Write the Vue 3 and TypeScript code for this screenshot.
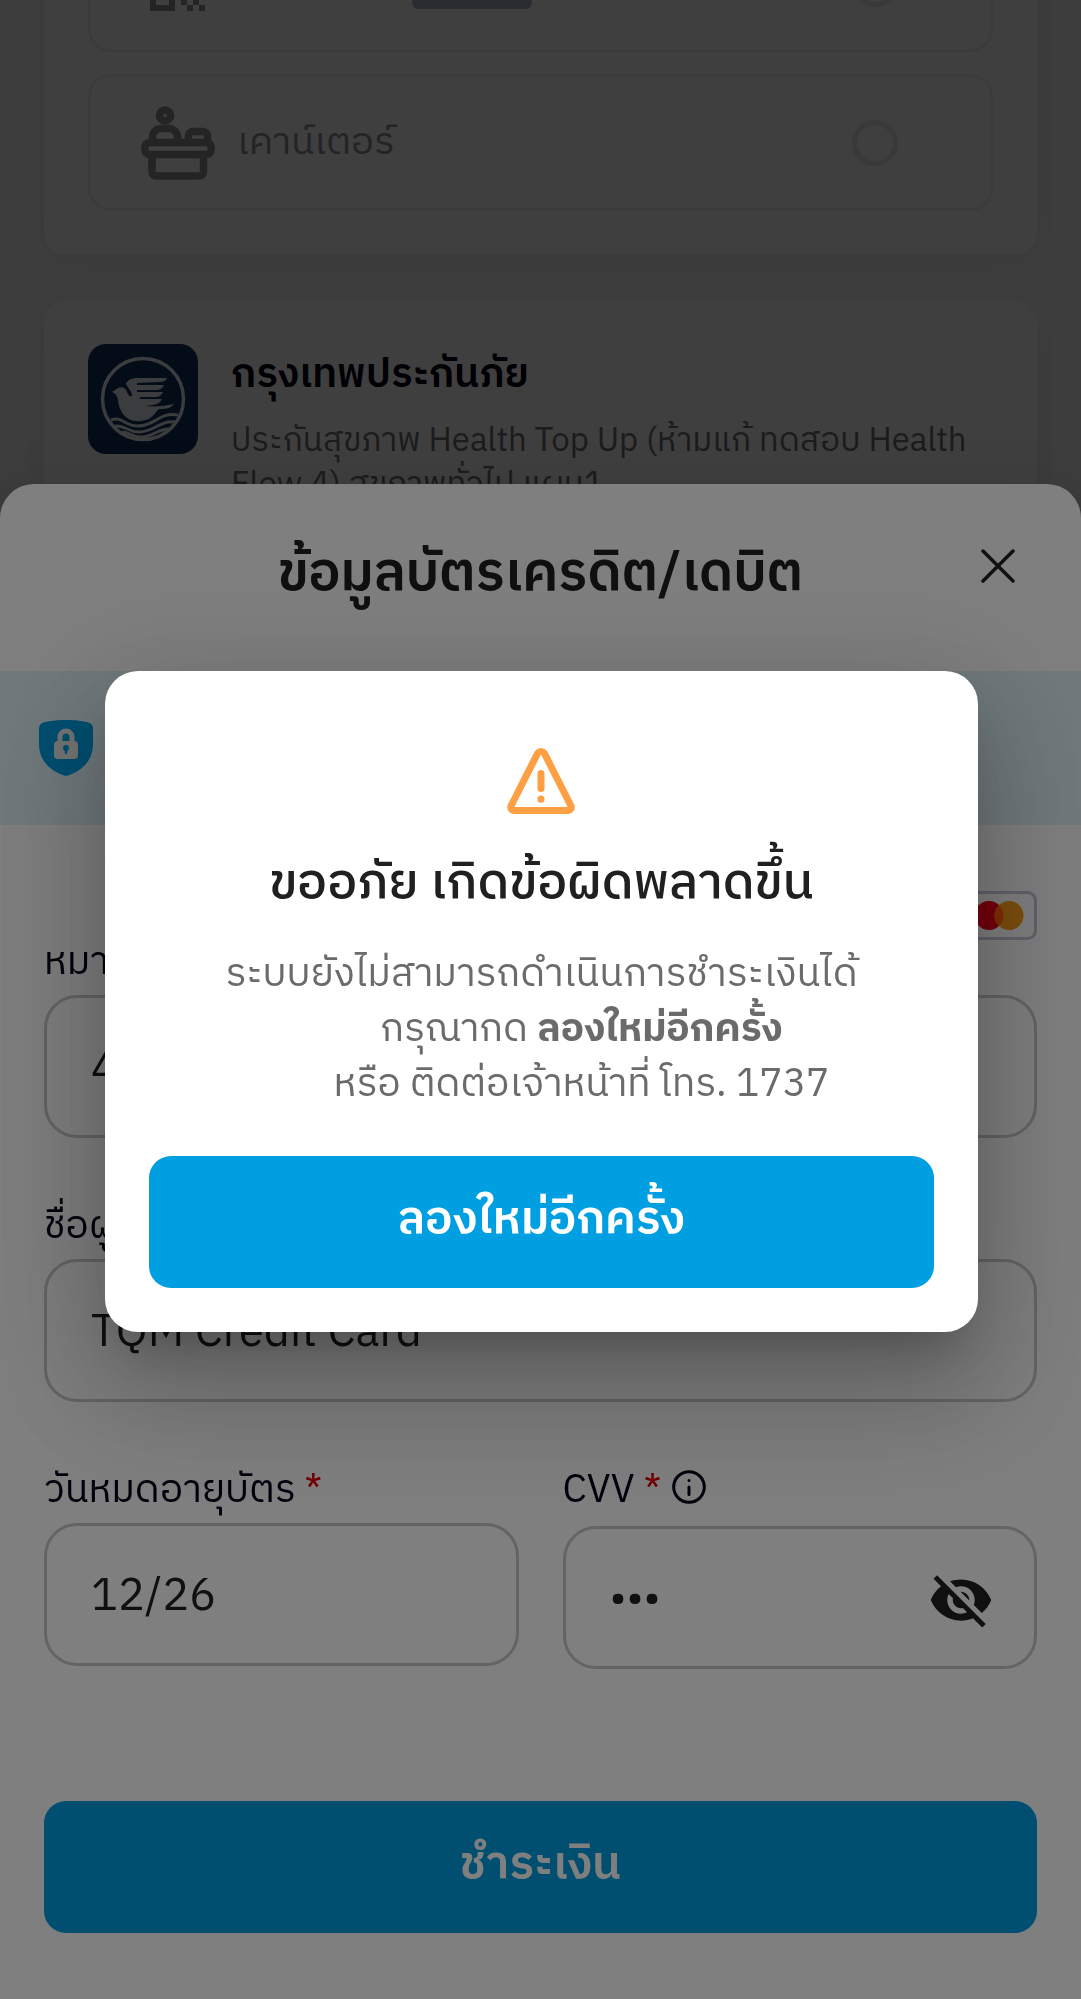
<script setup lang="ts">
import { ref } from 'vue'

const cardNumber = ref<string>('4')
const holder = ref<string>('TQM Credit Card')
const expiry = ref<string>('12/26')
const cvv = ref<string>('123')
</script>

<template>
  <div class="screen">
    <main class="page">
      <section class="card methods">
        <div class="option clipped">
          <svg class="method-icon" viewBox="0 0 74 74" fill="none" stroke="#909090" stroke-width="6" aria-hidden="true">
            <path d="M12 12h19v19H12zM43 12h19v19H43zM12 43h19v18H12z" />
            <path fill="#909090" stroke="none" d="M46 46h6v6h-6zM58 46h6v6h-6zM40 52h6v6h-6zM52 52h6v6h-6zM46 58h6v6h-6zM58 58h6v6h-6z" />
          </svg>
          <span class="brand-chip"></span>
          <input class="radio" type="radio" name="method" aria-label="QR" />
        </div>
        <div class="option">
          <svg class="method-icon" viewBox="0 0 74 74" fill="none" stroke="#909090" stroke-width="7.500" stroke-linejoin="round" aria-hidden="true">
            <circle cx="24" cy="9.500" r="5.500" />
            <path d="M11.500 36v-5a8.500 8.500 0 0 1 8.500-8.500h8a8.500 8.500 0 0 1 8.500 8.500v5M47.500 36v-6a4.500 4.500 0 0 1 4.500-4.500h10a4.500 4.500 0 0 1 4.500 4.500v6" />
            <rect x="3.800" y="36.500" width="66.400" height="12" rx="5" />
            <path d="M11 48v18a4 4 0 0 0 4 4h43.500a4 4 0 0 0 4-4V48" />
          </svg>
          <label class="method-name" for="counter">เคาน์เตอร์</label>
          <input id="counter" class="radio" type="radio" name="method" />
        </div>
      </section>

      <section class="card product">
        <svg class="logo" viewBox="0 0 110 110" aria-hidden="true">
          <rect width="110" height="110" rx="18" fill="#10305c" />
          <circle cx="55" cy="55" r="40.500" fill="none" stroke="#e8f0f4" stroke-width="3.500" />
          <path fill="#e8f0f4" d="M24 48l6-4c4-2 8 0 9 4 1 3 3 5 5 4 1-3-4-8-6-12 1-4 6-6 11-6h30c-1 3-4 4-8 4l-22 1v2h27c-1 3-4 5-8 5H49v2h26c-1 3-4 5-8 5H52v2h22c-2 5-7 6-16 7 8 1 18 0 28-2-3 4-6 5-15 5-4 3-6 11-18 12-14 2-22-9-23-21-1-4-2-6-6-8z" />
          <path fill="none" stroke="#e8f0f4" stroke-width="3" d="M23 76c12-4 13 6 27 6 18 0 20-14 40-11M27 82c11-1 12 6 24 6 16 0 20-12 37-10M34 88c8 0 9 5 19 5 13 0 17-9 29-8" />
        </svg>
        <div class="product-text">
          <h2>กรุงเทพประกันภัย</h2>
          <p>ประกันสุขภาพ Health Top Up (ห้ามแก้ ทดสอบ Health Flow 4) สุขภาพทั่วไป แผน1</p>
        </div>
      </section>
    </main>

    <div class="overlay bottom">
      <form class="sheet" @submit.prevent>
        <header class="sheet-head">
          <h1>ข้อมูลบัตรเครดิต/เดบิต</h1>
          <button class="close" type="button" aria-label="Close">
            <svg viewBox="0 0 34 34" stroke="#202020" stroke-width="3.500" stroke-linecap="round" aria-hidden="true">
              <path d="M2 2l30 30M32 2L2 32" />
            </svg>
          </button>
        </header>
        <div class="notice">
          <svg class="shield" viewBox="0 0 56 56" aria-hidden="true">
            <path fill="#009fe2" d="M28 0c10 0 16 1 21 2 4 1 6 3 6 7v15c0 17-12 28-27 32C13 52 1 41 1 24V9c0-4 2-6 6-7 5-1 11-2 21-2z" />
            <rect x="16" y="21" width="24" height="18" rx="4" fill="#e8e8e8" />
            <path fill="none" stroke="#e8e8e8" stroke-width="5" d="M22 23v-6a6 6 0 0 1 12 0v6" />
            <circle cx="28" cy="28" r="3" fill="#009fe2" />
            <path fill="#009fe2" d="M26.500 29h3l-.5 5h-2z" />
          </svg>
        </div>
        <div class="fields">
          <div class="field">
            <div class="label-row first">
              <label for="number">หมายเลขบัตร</label>
              <svg class="mastercard" viewBox="0 0 75 49" aria-hidden="true">
                <rect x="1.500" y="1.500" width="72" height="46" rx="8" fill="#fff" stroke="#c4c4d4" stroke-width="3" />
                <circle cx="27" cy="24.500" r="14.500" fill="#eb001b" />
                <circle cx="47" cy="24.500" r="14.500" fill="#f79e1b" />
                <path fill="#ff5f00" d="M37 14a14.500 14.500 0 0 1 0 21 14.500 14.500 0 0 1 0-21z" />
              </svg>
            </div>
            <input id="number" v-model="cardNumber" class="box" inputmode="numeric" />
          </div>
          <div class="field">
            <div class="label-row"><label for="holder">ชื่อผู้ถือบัตร</label></div>
            <input id="holder" v-model="holder" class="box" />
          </div>
          <div class="pair">
            <div class="field">
              <div class="label-row"><label for="expiry">วันหมดอายุบัตร <b>*</b></label></div>
              <input id="expiry" v-model="expiry" class="box" />
            </div>
            <div class="field">
              <div class="label-row tall">
                <label for="cvv">CVV <b>*</b></label>
                <svg class="info" viewBox="0 0 34 34" fill="none" stroke="#000018" stroke-width="3" stroke-linecap="round" aria-hidden="true">
                  <circle cx="17" cy="17" r="15.300" />
                  <path d="M17 17v7.500M17 10.400v.2" />
                </svg>
              </div>
              <div class="box secret">
                <input id="cvv" v-model="cvv" type="password" />
                <button type="button" aria-label="Show CVV">
                  <svg viewBox="0 0 24 24" fill="#202020" aria-hidden="true">
                    <path d="M12 7c2.760 0 5 2.240 5 5 0 .650-.130 1.260-.360 1.830l2.920 2.920c1.510-1.260 2.700-2.890 3.430-4.750-1.730-4.390-6-7.500-11-7.500-1.400 0-2.740.250-3.980.700l2.160 2.160C10.740 7.130 11.350 7 12 7zM2 4.270l2.280 2.280.460.460C3.080 8.300 1.780 10.020 1 12c1.730 4.390 6 7.500 11 7.500 1.550 0 3.030-.300 4.380-.840l.420.420L19.730 22 21 20.730 3.270 3 2 4.270zM7.530 9.800l1.550 1.550c-.050.210-.080.430-.080.650 0 1.660 1.340 3 3 3 .220 0 .440-.030.650-.080l1.550 1.550c-.670.330-1.410.530-2.200.530-2.760 0-5-2.240-5-5 0-.790.200-1.530.530-2.200zm4.310-.780l3.150 3.150.020-.160c0-1.660-1.340-3-3-3l-.170.010z" />
                  </svg>
                </button>
              </div>
            </div>
          </div>
          <button class="primary" type="submit">ชำระเงิน</button>
        </div>
      </form>
    </div>

    <div class="overlay center">
      <section class="dialog" role="alertdialog" aria-labelledby="alert-title">
        <svg class="warn" viewBox="0 0 68 66" fill="none" stroke="#ff9f43" stroke-width="7" stroke-linecap="round" stroke-linejoin="round" aria-hidden="true">
          <path d="M30.500 5.500L4 58q-1 4 3 4.500h54q4-.5 3-4.500L37.500 5.500q-3.500-4-7 0z" />
          <path d="M34 25.500v15M34 51v.2" />
        </svg>
        <h2 id="alert-title">ขออภัย เกิดข้อผิดพลาดขึ้น</h2>
        <p>
          <span>ระบบยังไม่สามารถดำเนินการชำระเงินได้</span>
          <span class="indent">กรุณากด <strong>ลองใหม่อีกครั้ง</strong></span>
          <span class="indent">หรือ ติดต่อเจ้าหน้าที่ โทร. 1737</span>
        </p>
        <button class="primary" type="button">ลองใหม่อีกครั้ง</button>
      </section>
    </div>
  </div>
</template>

<style>
body {
  margin: 0;
}
</style>

<style scoped>
.screen {
  height: 100vh;
  overflow: hidden;
  background: #f5f5f5;
  color: #202020;
  font-family: "IBM Plex Sans Thai", "Noto Sans Thai", "Noto Sans", sans-serif;
}
.screen * {
  box-sizing: border-box;
}
h1, h2, p {
  margin: 0;
}
button, input {
  font: inherit;
  color: inherit;
  border: 0;
  padding: 0;
  background: none;
}
svg {
  display: block;
  flex: none;
}
.page {
  padding: 0 44px;
}
.card {
  background: #fff;
  border-radius: 22px;
  box-shadow: 0 6px 28px rgba(0, 0, 0, 0.06);
  padding: 44px;
}
.methods {
  padding-top: 0;
  margin-bottom: 45px;
}
.option {
  display: flex;
  align-items: center;
  gap: 22px;
  height: 137px;
  margin-bottom: 22px;
  padding: 0 92px 0 50px;
  border: 3px solid #efefef;
  border-radius: 22px;
}
.option:last-child {
  margin-bottom: 0;
}
.clipped {
  margin-top: -85px;
}
.method-icon {
  width: 74px;
  height: 74px;
}
.method-name {
  font-size: 38px;
  color: #8c9096;
}
.brand-chip {
  width: 120px;
  height: 50px;
  margin-left: 175px;
  border-radius: 6px;
  background: #a5b2c4;
}
.radio {
  appearance: none;
  width: 46px;
  height: 46px;
  margin: 0 0 0 auto;
  border: 5px solid #e4e4e4;
  border-radius: 50%;
}
.product {
  display: flex;
  align-items: flex-start;
  gap: 33px;
}
.logo {
  width: 110px;
  height: 110px;
}
.product-text h2 {
  font-size: 40px;
  line-height: 62px;
  font-weight: 600;
  color: #000010;
}
.product-text p {
  margin-top: 14px;
  font-size: 33px;
  line-height: 44px;
  color: #707070;
}
.overlay {
  position: fixed;
  inset: 0;
  display: flex;
  background: rgba(0, 0, 0, 0.5);
}
.bottom {
  align-items: flex-end;
}
.center {
  align-items: center;
  justify-content: center;
  padding: 3px 0 0 2px;
}
.sheet {
  width: 100%;
  background: #fff;
  border-radius: 34px 34px 0 0;
  overflow: hidden;
  box-shadow: 0 22px 28px -14px rgba(0, 0, 0, 0.2), 0 44px 66px 6px rgba(0, 0, 0, 0.14), 0 16px 82px 14px rgba(0, 0, 0, 0.12);
}
.sheet-head {
  display: grid;
  grid-template-columns: 34px 1fr 34px;
  align-items: center;
  height: 187px;
  padding: 0 66px 6px;
}
.sheet-head h1 {
  grid-column: 2;
  text-align: center;
  font-size: 54px;
  line-height: 88px;
  font-weight: 600;
}
.close {
  width: 34px;
  height: 34px;
  margin-bottom: 18px;
}
.notice {
  height: 154px;
  padding: 49px 38px;
  background: #e1f2f8;
}
.shield {
  width: 56px;
  height: 56px;
}
.fields {
  padding: 66px 44px;
}
.field {
  margin-bottom: 65px;
}
.label-row {
  display: flex;
  align-items: center;
  gap: 11px;
  height: 48px;
  margin-bottom: 8px;
  font-size: 39px;
  line-height: 48px;
  color: #000018;
  white-space: nowrap;
}
.label-row b {
  font-weight: 400;
  color: #e40000;
}
.first {
  height: 96px;
  justify-content: space-between;
  align-items: flex-start;
}
.first label {
  align-self: flex-end;
}
.tall {
  margin-bottom: 11px;
}
.mastercard {
  width: 75px;
  height: 49px;
}
.info {
  width: 34px;
  height: 34px;
  margin-bottom: 8px;
}
.box {
  display: block;
  width: 100%;
  height: 143px;
  padding: 4px 44px 0;
  border: 3px solid #c8c8c8;
  border-radius: 33px;
  font-size: 45px;
}
.pair {
  display: grid;
  grid-template-columns: minmax(0, 1fr) minmax(0, 1fr);
  gap: 44px;
}
.secret {
  display: flex;
  align-items: center;
  gap: 12px;
  padding-right: 40px;
  font-size: 43px;
}
.secret input {
  flex: 1;
  min-width: 0;
}
.secret button, .secret svg {
  width: 66px;
  height: 66px;
}
.primary {
  display: block;
  width: 100%;
  height: 132px;
  padding-bottom: 4px;
  border-radius: 22px;
  background: #009fe2;
  color: #fff;
  font-size: 46px;
  font-weight: 600;
}
.fields .primary {
  margin-top: 67px;
}
.dialog {
  width: 81%;
  padding: 77px 44px 44px;
  border-radius: 33px;
  background: #fff;
  text-align: center;
  box-shadow: 0 30px 41px -19px rgba(0, 0, 0, 0.2), 0 66px 104px 8px rgba(0, 0, 0, 0.14), 0 25px 127px 22px rgba(0, 0, 0, 0.12);
}
.warn {
  width: 68px;
  height: 66px;
  margin: 0 auto 32px;
}
.dialog h2 {
  font-size: 50px;
  line-height: 76px;
  font-weight: 500;
  margin-bottom: 25px;
}
.dialog p {
  margin-bottom: 44px;
  font-size: 39px;
  line-height: 55px;
  color: #6b6b6b;
}
.dialog p span {
  display: block;
}
.dialog .indent {
  padding-left: 80px;
}
</style>
